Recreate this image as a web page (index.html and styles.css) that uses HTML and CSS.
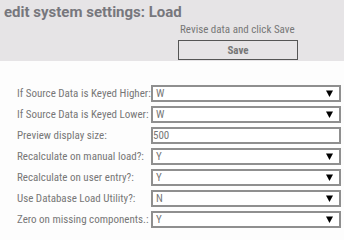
FILE: index.html
```html
<!DOCTYPE html>
<html>
<head>
<meta charset="utf-8">
<link rel="stylesheet" href="styles.css">
</head>
<body>
<div class="header">
  <h1 class="title">edit system settings: Load</h1>
  <div class="actions">
    <div class="hint">Revise data and click Save</div>
    <button class="save">Save</button>
  </div>
</div>
<div class="form">
  <div class="row"><div class="label">If Source Data is Keyed Higher:</div><div class="select"><span>W</span><svg class="arrow" width="7" height="7" viewBox="0 0 7 7"><polygon points="0,0.5 7,0.5 3.5,7" fill="#000"/></svg></div></div>
  <div class="row"><div class="label">If Source Data is Keyed Lower:</div><div class="select"><span>W</span><svg class="arrow" width="7" height="7" viewBox="0 0 7 7"><polygon points="0,0.5 7,0.5 3.5,7" fill="#000"/></svg></div></div>
  <div class="row"><div class="label">Preview display size:</div><div class="input">500</div></div>
  <div class="row"><div class="label">Recalculate on manual load?:</div><div class="select"><span>Y</span><svg class="arrow" width="7" height="7" viewBox="0 0 7 7"><polygon points="0,0.5 7,0.5 3.5,7" fill="#000"/></svg></div></div>
  <div class="row"><div class="label">Recalculate on user entry?:</div><div class="select"><span>Y</span><svg class="arrow" width="7" height="7" viewBox="0 0 7 7"><polygon points="0,0.5 7,0.5 3.5,7" fill="#000"/></svg></div></div>
  <div class="row"><div class="label">Use Database Load Utility?:</div><div class="select"><span>N</span><svg class="arrow" width="7" height="7" viewBox="0 0 7 7"><polygon points="0,0.5 7,0.5 3.5,7" fill="#000"/></svg></div></div>
  <div class="row"><div class="label">Zero on missing components.:</div><div class="select"><span>Y</span><svg class="arrow" width="7" height="7" viewBox="0 0 7 7"><polygon points="0,0.5 7,0.5 3.5,7" fill="#000"/></svg></div></div>
</div>
</body>
</html>
```
FILE: styles.css
```css
html, body {
  margin: 0;
  padding: 0;
  background: #fdfdfd;
  font-family: Roboto, "Liberation Sans", sans-serif;
  font-stretch: 80%;
  color: #777;
}
.header {
  background: #e6e4e6;
  height: 61px;
  box-sizing: border-box;
  padding: 3px 0 0 4px;
}
.title {
  margin: 0;
  font-size: 15px;
  font-weight: bold;
  font-stretch: 100%;
  color: #77777d;
  line-height: 18px;
}
.actions {
  margin-left: 174px;
  display: flex;
  flex-direction: column;
  align-items: flex-start;
}
.hint {
  font-size: 11px;
  line-height: 13px;
  margin: 2px 0 0 2px;
}
.save {
  margin-top: 4px;
  width: 120px;
  height: 20px;
  border: 1px solid #555;
  background: #e6e4e6;
  font-family: inherit;
  font-stretch: 80%;
  font-size: 11px;
  font-weight: bold;
  color: #777;
  padding: 0;
}
.form {
  padding: 24px 0 0 17px;
  display: flex;
  flex-direction: column;
  gap: 4px;
}
.row {
  display: flex;
  align-items: center;
  height: 17px;
}
.label {
  width: 134px;
  font-size: 11px;
  font-stretch: 78%;
  color: #777;
  white-space: nowrap;
}
.select, .input {
  width: 190px;
  height: 17px;
  box-sizing: border-box;
  border: 2px solid #8f8f8f;
  background: #fff;
  font-size: 11px;
  color: #777;
  display: flex;
  align-items: center;
}
.select {
  justify-content: space-between;
  padding: 0 6px 0 3px;
}
.input {
  padding: 0;
}
.arrow {
  display: block;
}
```
